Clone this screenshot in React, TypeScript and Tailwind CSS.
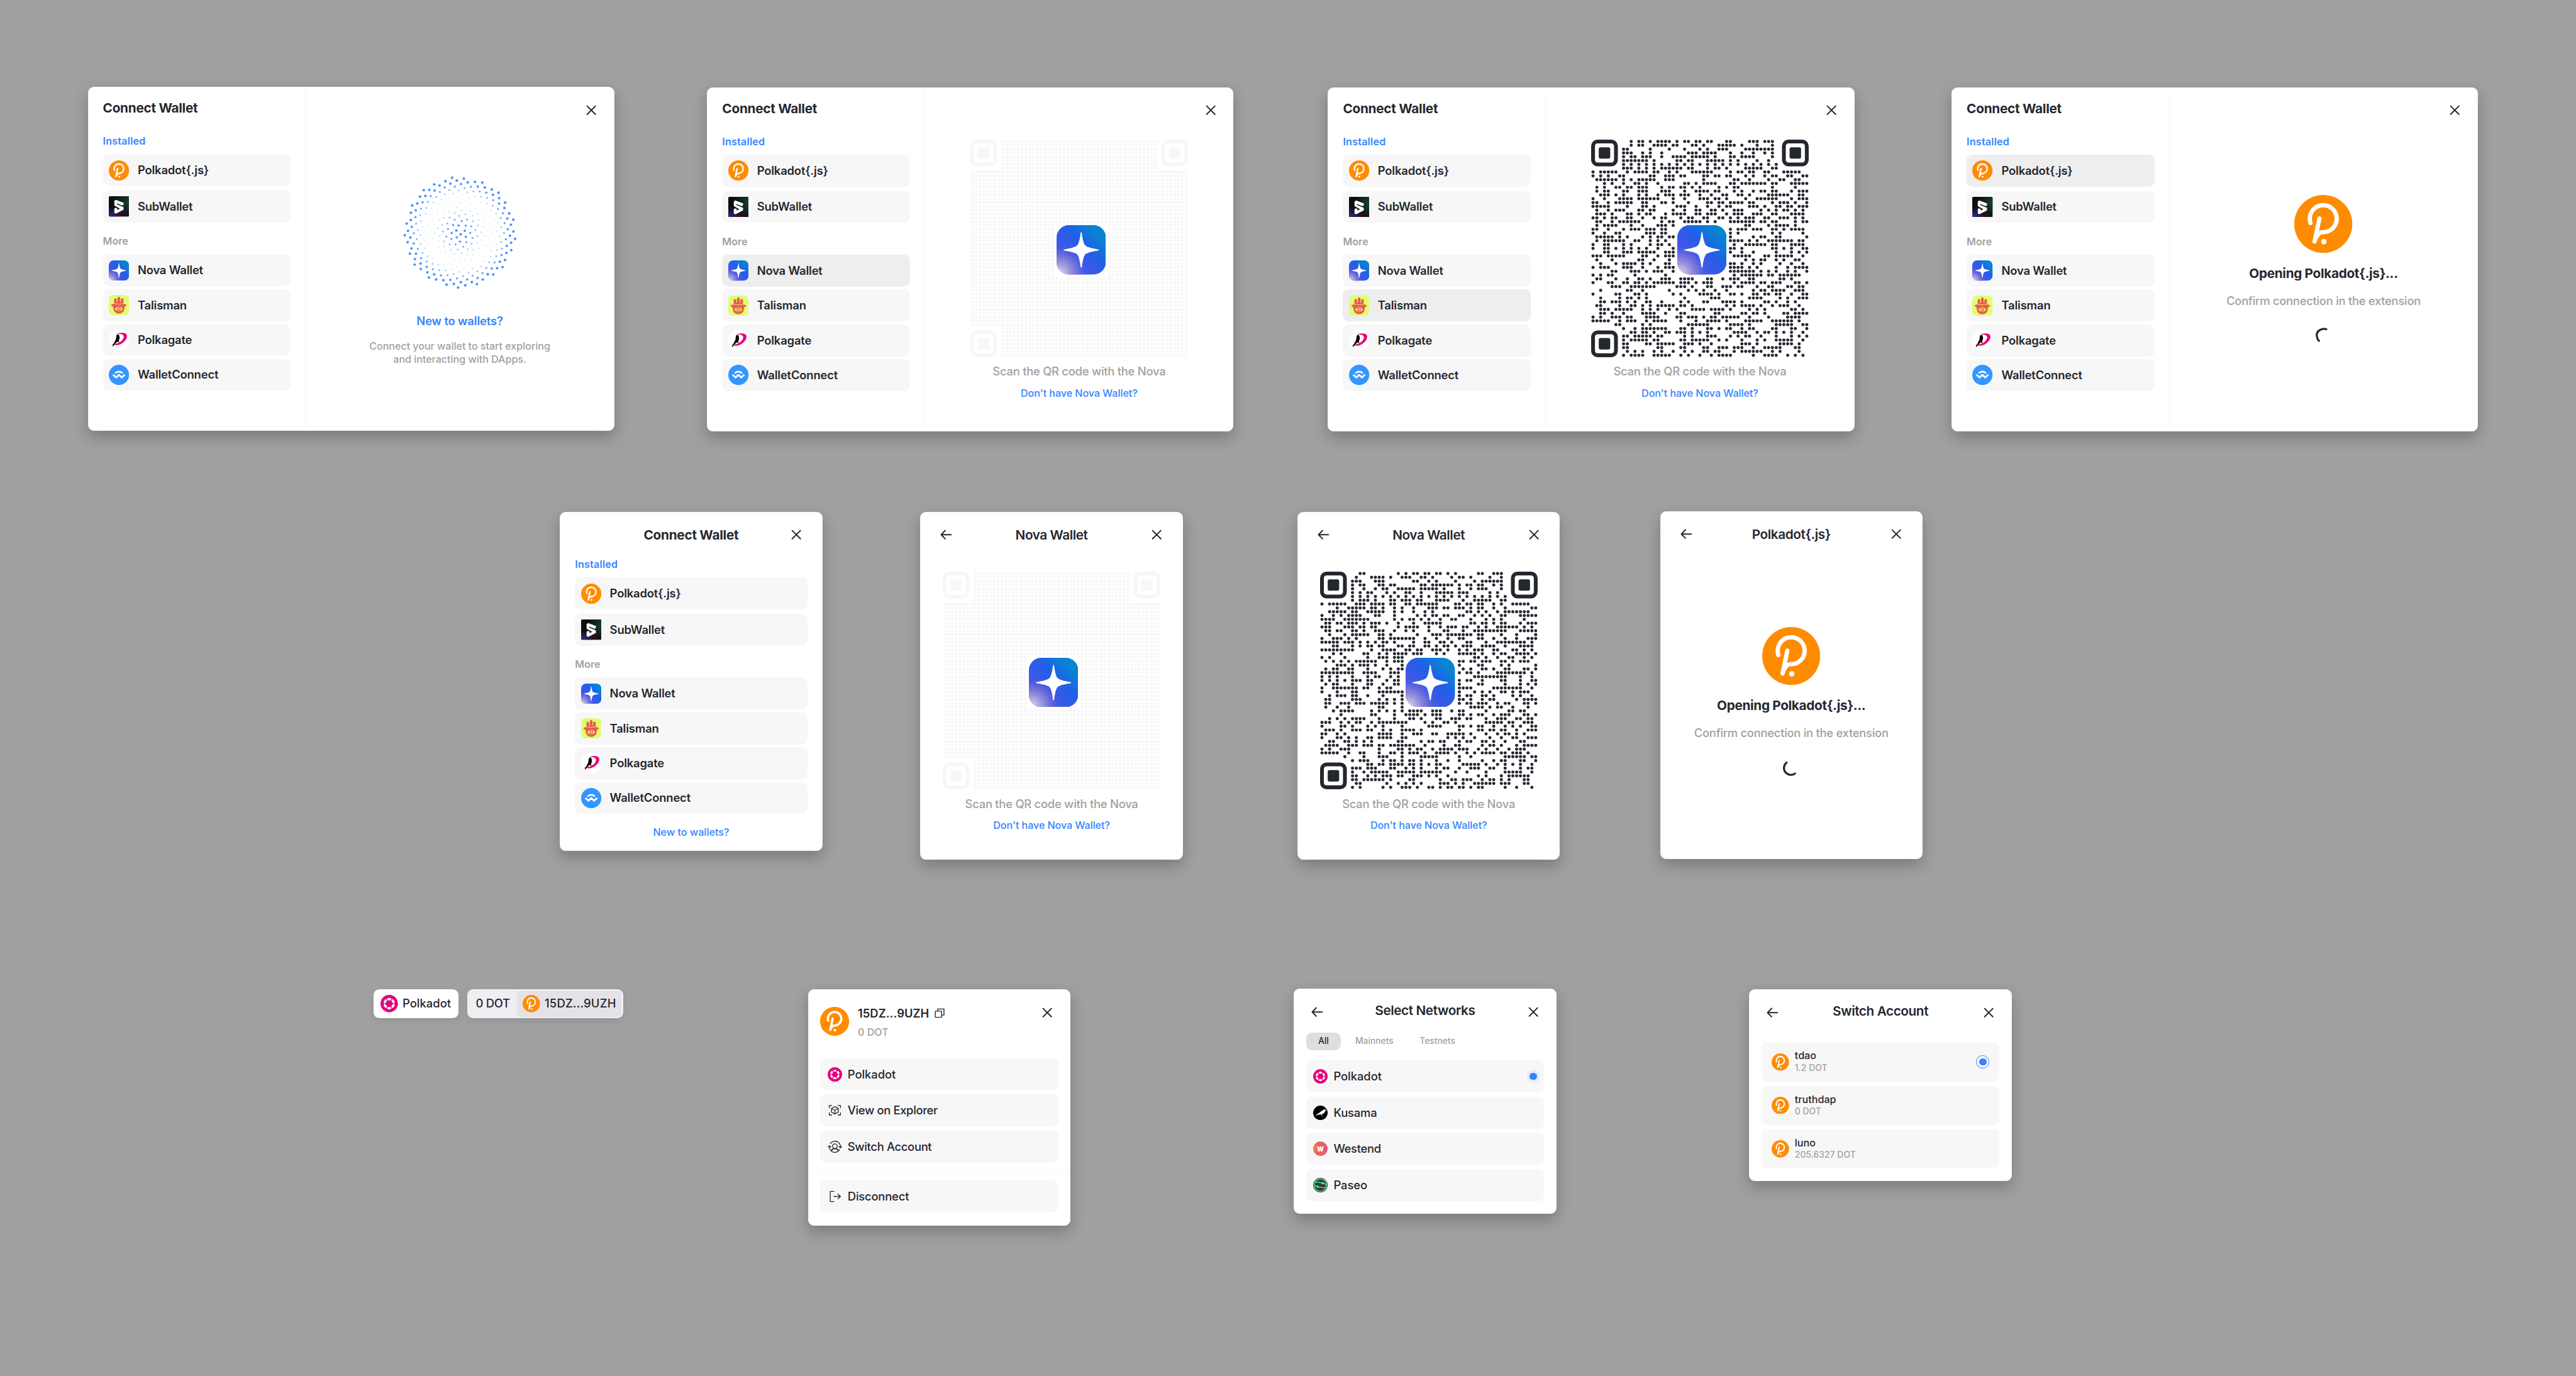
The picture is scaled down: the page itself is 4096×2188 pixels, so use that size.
import type { ReactNode } from "react";

const QR_DESKTOP = `10,12-13,15,17-20,22,24-25,27-28,30-31,35-36,41-43,45-47
10,12-13,16-19,21-22,26-27,29,33-37,39,43,47
8-9,15,20,24,28,30,33-35,40-47
8-10,13,15,18,25-27,29-32,36,39,42,45,47
8,10-11,13-15,18,21-24,26-30,32,36-37,39-42,47
8-14,16,22-23,25-26,30-34,36,38,43,46
8,10,12,14,16,18,20,22,24,26,28,30,32,34,36,38,40,42,44,46,48
8-10,12,14,16,18-23,25-26,30,32-33,35,40-44,47-48
0,2-6,9,11-14,16-17,20,22,26-31,36,38-39,41-42,45-46,50-54
0,2,4,7-8,15-16,19-21,23-24,29-30,32-33,35-36,40,42,45,47-48,51-52,55-56
1-6,8,10,12-16,19-21,29,37-38,41,46,49-50,53-54
3,5,8,11-12,14,17,24-25,27,29-32,36-37,39-45,47-48,52-56
1,3,6-7,9-10,12-14,18,20-21,23-24,26,28,33,35,37-38,47,53
1,3-4,8-9,12-14,18-20,24,27-30,32-33,37,39,42,44-45,47-48,52,54-56
2-4,6,8,12,14,17,19-21,23-25,28,31,34-35,38-39,41,46-51,54-55
0,3,7-10,12-17,21,24,28-30,32-33,35,40,43-48,52,54-56
0-1,4,6-10,13-14,18-19,21,25,30-31,33-34,36-39,41-42,47,49-51,53,56
0-4,9,13-14,16,22-24,27,30,33,35-36,41-43,45,48-49,51-52,54-56
1,4,6-8,12-13,15-16,21,24,27-28,31-32,34,37-39,44,46,48,50-51,53,55
1-3,5,9-10,12,14-15,19,21-24,27-28,30-32,35,37-39,42-44,47-48,52-55
0-1,3,5-6,9-10,13,16,18-19,23,25-26,29-30,33-34,36,38,40-42,45-46,49-51,53,55
1-2,5,7-12,18,20-21,24-28,30,32,36-42,44-45,47-48,53,55-56
1,3-6,10,13,17-19,21,40-41,46,48-51,53
0-1,4,8,10-12,14-16,18-19,36,38-40,42-44,47-48,50,52-55
0,3,6-7,14-16,18-19,36,38,47,49,55
1-5,7,9,13,15,17-18,20-21,36,42,44-45,48-49,56
1,3-8,11-12,15,17,19,36-39,41,43,46-52,54-55
0,3-4,8,10,15,17-18,20,37,40-45,47-48,52-55
0,3-4,6,8,10,12,14,17,21,36-37,39,47-48,50,52,55-56
3-4,8-10,12-16,19-21,36,39,42,48,52,54,56
0-2,4-8,13-14,17,19-21,37-41,45-46,48-52,55
1,5,12-13,16,20,40,42,44-45,48,50,53-54
2,6,8-11,13,15,19-20,36-37,39,42,44,49,52,55
0,2-4,8-10,13,17,19-21,36-39,41,43,48,51,53-56
5-6,10-12,14,16-18,21,36-42,44,46,48,51,53,56
0,2,4-5,11,19,37,39-44,46-47,49-54
1-2,6,9,12-13,15,18-20,23-26,30-31,34,36-38,41-42,49-50,52
0,4-5,8-9,11-12,14,16-21,23-25,27,29-31,37,39-42,44-45,47-49,53-54,56
5-7,10-16,22-24,26,30-31,34-36,38-39,43,46-47,51-52,54-55
2,9-10,13,20,25,27,29,32,35,42,44-45,47-50,53-55
0,6-7,11-12,14,21,23,28-31,33,36-37,39,42-43,45-46,48-49,52,55-56
2,7,9-10,12,14,24,31-33,41-44,49,51,54-56
2-3,5-7,9,11,14-15,18,23,25,29-30,34-37,39,45-46,48,51,53
1-2,7,10-11,13,15,17-21,23-24,26,35,37,39-42,44,47,49-51,54
2-4,6-10,13,15,17,20,22,26-29,31-34,36,41,43,45,52-53,55
2-3,5,8,13-16,19,23-24,32-33,39-40,42-43,45,50-51,53-56
0,2,5-7,9-10,14-17,22-23,25-27,29,31-32,34-38,41,46,51-54
0-4,7,9-11,14,16-19,23,27,30-33,35,40-44,47-52,54
6-7,13,15,25-30,36-39,41,48-52,55-56
8,11,13-19,23-24,26,30-31,33,35-36,39,41-42,47-48,52-53,56
10-11,13-14,16,19-20,22-24,26,28,30,37-40,43,45-46,48,50,52,55
8-9,11-15,17-18,24,26,30-32,36,38,40-41,44,48,52,54,56
8,10-14,16-17,23-24,26-30,33,35,39,43,45,48-52,55
8-9,14-15,17-21,24-26,28,31,39-41,43,49-52,54
8-9,17-18,23-24,29-30,33-35,37-39,42,45-49,53-54
9,11,13,16,18,21,24,26,29-30,32-33,37,39-44,47,49,54
8,10-13,16-20,23,25,28,31,33-36,42,45-48,51,53,55`;

const QR_MOBILE = `10-11,20,22,24-25,27-28,30-31,33,35,41-42,45-47
9,13-16,18,21-23,26-27,29,34,36-37,39,44,47
8-10,14-16,24-25,28,30,35,40,42-47
8,10-11,15-16,18-19,26-27,29-34,36,38-39,41-42,45,47
8,11,14,16-17,20-24,26-30,32,36,39,41-43,47
8,10,12-13,17,19,22-23,26,30-34,36-38,44,46
8,10,12,14,16,18,20,22,24,26,28,30,32,34,36,38,40,42,44,46,48
8,10-12,14,18-19,21-23,25-26,30-33,37,40-44,47-48
0,2-6,9-11,13-16,18-19,22-23,25-30,35-36,38-39,41-42,45,47,50-54
4,7-11,13-14,16,19,21,24,28-30,32-33,35-37,39,41-42,45,48,55-56
2-6,8-9,12-16,19,21,24,27,29,38-39,41,43,46,48-54
0,3,5,7-10,14-15,19,25,27,29-30,32-33,36-37,40,42,44,47-48,52-56
0-3,6-12,19,21,23-24,26,28,31,34-35,39,43,45,47,53
1-2,4-5,7-9,11,13-15,17,20,24,27-31,39-40,42-43,45,47-48,52,54-56
0-2,6-8,10-11,13-14,20,22-25,28,31,33-35,37-38,41,43,46-51,53,55
1-2,4-5,8-9,11,14-16,19,22,24,28,32-33,37,40-48,52-56
2,6,8-12,15-16,18,25,29-31,33-39,41-42,47,51,56
0,3-5,7,9,15-16,18-24,27,30,33,36-37,41-42,45,48,51,54-56
0-4,6-8,10,12,14,16-17,19,24,27-28,31-32,34,38-39,43,46-53,55
3-4,8,10,12-13,15-16,20-21,23-24,27-28,30,32-33,35,37-39,42-45,48,52-55
0-8,13,16-19,22-23,25-26,29-31,33,36,38,40-42,45-46,50-51,53,55
3,5,11-12,15,17,19-22,24-26,30,32,36-40,42,45,47-48,51-54,56
0,2,6,12,15-17,19-21,40-41,43,46,49-50,53,55
1,3,5,7,9-14,17,19-21,36-37,39-40,42-44,47-48,50,52-54
4-6,8,10-12,14,17,21,36,41-42,47,49,56
1,3-4,7-8,12,16,18,20-21,37,39,42-43,45,48-49,53-54,56
0-8,11-14,18-20,36,38-39,41,46-53,55
0,2,4,8,12,14-15,18,20,40-48,52,55
0,2,4,6,8-10,12-13,17,19-20,36,38-39,42,47-48,52,55-56
1,3-4,8,12-13,16,19-20,36,41-42,48,52,54,56
0,3-9,11-12,15,17-18,36-39,45-52,55
0,4,8-9,15-21,36,40,42,44,47-48,50,52-54
2,4-6,8-9,12,16,21,36,38-39,42-43,45,50,52,55
1-2,8-10,15,17,19,21,36-37,39,42,44-45,51,53-56
1-2,5-7,9-11,13-17,19,21,36,38-39,41-43,46,48-49,53-54,56
1,4,7,15-16,21,39-42,44,46-47,50,54
3,5-8,13,15,17,19,21,23-26,29-31,34,36-37,43,49-50,52-53
5,13-14,19,22-25,27,29-31,36-37,39,41-42,45,47-49,53-54,56
2,4,6,8-11,15,19,23-24,26,30-31,34-36,38-39,43,46-48,51-52,54-55
0-2,5,7,9-10,13,15-22,27,29,32-33,35,43-47,49-50,53-55
0,5-6,8,12,14,16,21,28-31,36-37,39,41-42,45,48,50,52,55-56
1-3,5,8-10,12-13,16,18,21-24,26,36,41-42,44-45,47-48,51,54-56
0-1,4,6,15-18,21,24-26,29-30,33-37,39,43,46,48-49,51,53
0,4-5,7,9,12-13,15-18,21-22,33,35,37,40,44,47,50-51,54-56
2-3,6-7,9,11,13,20-21,26,28-29,31-32,36,38-39,42-43,45,48,52-53
1-4,7-9,11-13,15-16,18-24,27,32,35-36,42,44-45,47,51,53-56
0,2,5-7,15,20-21,23,25-26,29,31-34,36-38,41,43,46,49,51-53
0-4,7,10-11,15,18-19,21,23-25,27,30-33,35,38,40,42-45,47-48,50-52,54
6,11,15-17,21,26-30,36,39,48-53,55-56
8,10-12,16,18-19,21,23-24,26,30,33,36,42,45,47-48,52-53,56
12-13,15-16,18-21,23-24,26,28,30-31,37-41,43,46,48,50,52,55
8-10,12-14,18-19,22,24,26,30,32-33,36,39-41,44-45,48,52,54-55
8,11,13-17,20-24,26-31,35,38,43,48-52,55
8-9,12,14,16-18,20-21,24-26,28,30,33,41,43,47,49-54
8-9,11-16,18,23-24,31,34-35,37-39,42,44-45,47,49,53-54
9-10,17,20,22,24,26,31-33,35,37,40-45,47-49,53-54
8,10,16,18,21-23,25,28-29,31,33-34,36-37,39,41-42,48,51,55`;

/* ---------- logos ---------- */

const PolkadotJs = ({ className }: { className: string }) => (
  <svg viewBox="0 0 80 80" className={`shrink-0 ${className}`} fill="none">
    <circle cx="40" cy="40" r="40" fill="#ff8c00" />
    <path
      d="M22.3 38.6C21.6 36.6 21.4 34.6 21.4 32.7A18.6 18.6 0 1 1 40 51.3C36 51.4 33 52 31.2 57.4M34.7 32.5L28.1 64.1"
      stroke="#fff"
      strokeWidth="5.9"
      strokeLinecap="round"
    />
    <path d="M33 49.5L40 51L36 55.5C33 57 32 60 31 65L29.5 54Z" fill="#fff" />
    <circle cx="40.8" cy="64.5" r="3.7" fill="#fff" />
  </svg>
);

const SubWallet = () => (
  <svg viewBox="0 0 28 28" className="size-7 shrink-0" fill="none">
    <defs>
      <radialGradient id="sw-g" cx="1" cy="0.3" r="0.75">
        <stop offset="0" stopColor="#173f33" />
        <stop offset="1" stopColor="#173f33" stopOpacity="0" />
      </radialGradient>
      <radialGradient id="sw-b" cx="0.05" cy="1" r="0.5">
        <stop offset="0" stopColor="#2b2f8c" />
        <stop offset="1" stopColor="#2b2f8c" stopOpacity="0" />
      </radialGradient>
      <radialGradient id="sw-m" cx="0.5" cy="1" r="0.45">
        <stop offset="0" stopColor="#3a1028" />
        <stop offset="1" stopColor="#3a1028" stopOpacity="0" />
      </radialGradient>
    </defs>
    <rect width="28" height="28" rx="1.4" fill="#0b0d0e" />
    <rect width="28" height="28" rx="1.4" fill="url(#sw-g)" />
    <rect width="28" height="28" rx="1.4" fill="url(#sw-m)" />
    <rect width="28" height="28" rx="1.4" fill="url(#sw-b)" />
    <path
      d="M7.6 6.6L9.8 5L20.4 9.2V11.8L18.4 12.8L11 9.8V11L20.4 15.1V18.6L9.8 24L7.6 22.9V17L9.4 15.8L11.6 16.8V18.9L15.4 17.1L7.6 12.8Z"
      fill="#fff"
    />
  </svg>
);

const Nova = ({ className }: { className: string }) => (
  <svg viewBox="0 0 68 68" className={`shrink-0 ${className}`} fill="none">
    <defs>
      <linearGradient id="nv-a" x1="0" y1="1" x2="1" y2="0">
        <stop offset="0" stopColor="#5a50e0" />
        <stop offset="0.4" stopColor="#3a59e8" />
        <stop offset="0.58" stopColor="#205fe8" />
        <stop offset="0.8" stopColor="#0b80d4" />
        <stop offset="1" stopColor="#0389cf" />
      </linearGradient>
      <radialGradient id="nv-b" cx="0.04" cy="1" r="0.62">
        <stop offset="0" stopColor="#e6e3ee" />
        <stop offset="0.3" stopColor="#b0a9dc" stopOpacity="0.95" />
        <stop offset="0.65" stopColor="#7a73d8" stopOpacity="0.75" />
        <stop offset="1" stopColor="#3a59e8" stopOpacity="0" />
      </radialGradient>
    </defs>
    <rect width="68" height="68" rx="17" fill="url(#nv-a)" />
    <rect width="68" height="68" rx="17" fill="url(#nv-b)" />
    <path
      d="M33.3 10H34.7C35.6 18 37.1 24.3 38.9 27.2Q39.9 28.5 41.4 29.2C44.5 30.8 50.5 32.3 58.2 33.5V34.8C50.5 36 44.5 37.4 41.4 39Q39.9 39.8 38.9 41.1C37.1 44 35.6 50.3 34.7 58.3H33.3C32.4 50.3 30.9 44 29.1 41.1Q28.1 39.8 26.6 39C23.5 37.4 17.5 36 9.8 34.8V33.5C17.5 32.3 23.5 30.8 26.6 29.2Q28.1 28.5 29.1 27.2C30.9 24.3 32.4 18 33.3 10Z"
      fill="#fff"
    />
  </svg>
);

const Talisman = () => (
  <svg viewBox="0 0 28 28" className="size-7 shrink-0" fill="none">
    <rect width="28" height="28" rx="7" fill="#deff70" />
    <g fill="#ee5850">
      <path d="M7.4 6.6a1.8 1.8 0 0 1 3.6 0V10L12 9.8V4.4a1.9 1.9 0 0 1 3.8 0V9.8L16.7 10V6.6a1.8 1.8 0 0 1 3.6 0V11.7Q17 11.4 13.9 12.6Q10.8 11.4 7.4 11.7Z" />
      <path d="M3 13.8Q4.6 12 7.4 12.4Q11 12.4 13.9 13.3Q16.8 12.4 20.4 12.4Q23.2 12 24.7 13.8Q23.9 15.3 22.3 15.6Q21.6 17 21.4 19.2C21 23 18 25.6 13.9 25.6S6.8 23 6.4 19.2Q6.2 17 5.4 15.6Q3.8 15.3 3 13.8Z" />
    </g>
    <path d="M8.3 19.2Q13.9 12.9 19.3 19.2Q13.9 25.5 8.3 19.2Z" fill="#deff70" />
    <circle cx="13.8" cy="19.2" r="2.5" fill="#ee5850" />
    <circle cx="13.8" cy="19.2" r="1.15" fill="#deff70" />
  </svg>
);

const Polkagate = () => (
  <svg viewBox="0 0 28 28" className="size-7 shrink-0" fill="none">
    <circle cx="14" cy="14" r="14" fill="#fff" />
    <path
      d="M11 6C14 4.8 17 4.5 18.8 4.6C22.6 4.7 25.1 6 25.1 9C25.1 14.6 17.6 21.4 10.4 21.4C8 21.4 5.8 21.1 4 20.2C12 20.8 20.2 15.8 20.6 10C20.7 6.6 15.6 5.5 11 6Z"
      fill="#e6007a"
    />
    <path
      d="M10.6 7.9Q11 6.6 12.7 6.6Q14.3 6.9 14.5 8.7Q15.6 11.4 14.2 14.4L13.5 16.2L15.3 17.9L11.7 17L9.8 18.4L5.6 23.1L4.7 22.8L7.9 17.4Q8.4 15.4 9.8 13.6Q10.2 10.6 10.6 7.9Z"
      fill="#000"
    />
  </svg>
);

const WalletConnect = () => (
  <svg viewBox="0 0 28 28" className="size-7 shrink-0" fill="none" stroke="#fff">
    <circle cx="14" cy="14" r="14" fill="#3396ff" stroke="none" />
    <path d="M5.8 13.7L10.1 17.5L14 14.1L17.9 17.5L22.2 13.7" strokeWidth="2.5" />
    <path d="M8.9 11.7Q14 7.3 19.1 11.7" strokeWidth="2.3" />
  </svg>
);

const Polkadot = ({ className }: { className: string }) => (
  <svg viewBox="0 0 24 24" className={`shrink-0 ${className}`} fill="#fff">
    <circle cx="12" cy="12" r="12" fill="#e6007a" />
    {[0, 60, 120, 180, 240, 300].map((a) => (
      <ellipse key={a} cx="12" cy="5.8" rx="2.9" ry="1.75" transform={`rotate(${a} 12 12)`} />
    ))}
  </svg>
);

const Kusama = () => (
  <svg viewBox="0 0 20 20" className="size-5 shrink-0">
    <circle cx="10" cy="10" r="10" fill="#000" />
    <path
      d="M2.4 13.9L9 9.5Q13 6.2 14.8 5.4Q17.2 4.6 18.4 6.5L17 6.8Q16.6 9.3 14.4 11L11.9 11.8L12 13L13 14.1L12.6 14.9L11 12.4L10.4 12.1L6.5 12.7Z"
      fill="#fff"
    />
  </svg>
);

const Westend = () => (
  <svg viewBox="0 0 20 20" className="size-5 shrink-0" fill="none">
    <defs>
      <linearGradient id="we" x1="0" y1="0.4" x2="1" y2="0.6">
        <stop offset="0" stopColor="#f0853c" />
        <stop offset="1" stopColor="#e8558c" />
      </linearGradient>
      <clipPath id="we-c">
        <circle cx="10" cy="10" r="10" />
      </clipPath>
    </defs>
    <circle cx="10" cy="10" r="10" fill="url(#we)" />
    <g clipPath="url(#we-c)" stroke="#e0247c" strokeWidth="0.35">
      <path d="M2 4.5Q10 3 17 4.5M0 8.5Q4 10 6 10M5 3Q10 -1 10 5Q9 9 4 13Q1 15 0 14M8 1Q5 6 9 8M14 9Q17 10 20 9.5M17 7Q15.5 11 18.5 14M7 14Q7 17 5 19M9 14Q11 18 17 17M3 16Q8 17 12 20" />
    </g>
    <text
      x="10"
      y="13.7"
      textAnchor="middle"
      fill="#fff"
      className="font-['Inter'] text-[8.4px] font-black"
    >
      W
    </text>
  </svg>
);

const Paseo = () => (
  <svg viewBox="0 0 20 20" className="size-5 shrink-0" fill="none" stroke="#4deb94">
    <circle cx="10" cy="10" r="10" fill="#38393f" stroke="none" />
    <circle cx="10" cy="10" r="8.6" strokeWidth="1.1" />
    <path
      d="M2.6 6.6C5 5.2 8 6 10.5 6.6C13.5 7 16.5 7 18.4 10.5M1.6 9.4C2.8 11 4 12 6.2 12.2C9 12.6 13 14.6 17.6 13"
      strokeWidth="1.2"
    />
    <g fill="#4deb94" stroke="none">
      <circle cx="13" cy="7.2" r="1.6" />
      <circle cx="6.2" cy="12.1" r="1.6" />
    </g>
  </svg>
);

/* ---------- glyphs ---------- */

const Close = () => (
  <svg viewBox="0 0 16 16" className="size-4 shrink-0" fill="none">
    <path d="M2.3 2.3L13.7 13.7M13.7 2.3L2.3 13.7" stroke="#25272f" strokeWidth="1.7" strokeLinecap="round" />
  </svg>
);

const Back = () => (
  <svg viewBox="0 0 16 16" className="size-4 shrink-0" fill="none">
    <path
      d="M6.9 2.2L1.3 8L6.9 13.8M1.3 8H15"
      stroke="#25272f"
      strokeWidth="1.7"
      strokeLinecap="round"
      strokeLinejoin="round"
    />
  </svg>
);

const Copy = () => (
  <svg viewBox="0 0 14 14" className="size-3.5 shrink-0" fill="none" stroke="#25272f" strokeWidth="1.2">
    <rect x="1" y="4.2" width="8.7" height="8.5" rx="0.6" />
    <path d="M4.2 4.2V1.2H13V9.7H9.7" strokeLinejoin="round" />
  </svg>
);

const Explorer = () => (
  <svg
    viewBox="0 0 20 20"
    className="size-5 shrink-0"
    fill="none"
    stroke="#25272f"
    strokeWidth="1.15"
    strokeLinecap="round"
    strokeLinejoin="round"
  >
    <path d="M2.3 6.5V3.4H5.7M14.3 3.4H17.7V6.5M17.7 13.4V16.5H14.3M5.7 16.5H2.3V13.4" />
    <path d="M10 4.9L14.7 7.4V12.5L10 15L5.3 12.5V7.4ZM5.3 7.4L10 10L14.7 7.4M10 10V15" />
  </svg>
);

const Switch = () => (
  <svg
    viewBox="0 0 20 20"
    className="size-5 shrink-0"
    fill="none"
    stroke="#25272f"
    strokeWidth="1.15"
    strokeLinecap="round"
    strokeLinejoin="round"
  >
    <path d="M3.8 5.6A7.6 7.6 0 0 1 17.6 11.2M16.4 14A7.6 7.6 0 0 1 2.4 8.8" />
    <path d="M15.5 9.6L17.6 11.4L19.5 9.6M0.6 10.3L2.4 8.6L4.5 10.3" />
    <circle cx="10" cy="9.2" r="3.3" />
    <path d="M5 15.2Q6.6 12.6 10 12.6T15 15.2" />
  </svg>
);

const Logout = () => (
  <svg
    viewBox="0 0 20 20"
    className="size-5 shrink-0"
    fill="none"
    stroke="#25272f"
    strokeWidth="1.15"
    strokeLinecap="round"
    strokeLinejoin="round"
  >
    <path d="M8.8 3H3.6V17H8.8M8.7 10H17.7M14.3 6.7L17.7 10L14.3 13.3" />
  </svg>
);

const Spinner = ({ d }: { d: string }) => (
  <svg viewBox="-12 -12 24 24" className="mt-[26px] size-6 shrink-0" fill="none">
    <path d={d} stroke="#25272f" strokeWidth="2.8" strokeLinecap="round" />
  </svg>
);

/* ---------- QR ---------- */

const CELL = 300 / 57;

function cells(source: string) {
  return source.split("\n").map((row) => {
    const out: number[] = [];
    row.split(",").forEach((part) => {
      const [a, b = a] = part.split("-").map(Number);
      for (let c = a; c <= b; c++) out.push(c);
    });
    return out;
  });
}

const BLANK = Array.from({ length: 57 }, (_, r) =>
  Array.from({ length: 57 }, (_, c) => c).filter(
    (c) =>
      !(r < 8 && (c < 8 || c > 48)) &&
      !(r > 48 && c < 8) &&
      !(r > 21 && r < 36 && c > 21 && c < 36),
  ),
);

const QR = ({ source }: { source?: string }) => {
  const rows = source ? cells(source) : BLANK;
  const color = source ? "#25272f" : "#f7f7f7";
  return (
    <div className="relative size-[300px] shrink-0">
      <svg viewBox="0 0 300 300" className="size-[300px]" fill={color}>
        {rows.map((row, r) =>
          row.map((c) => (
            <circle key={`${r}-${c}`} cx={(c + 0.5) * CELL} cy={(r + 0.5) * CELL} r={CELL * 0.41} />
          )),
        )}
        {[
          [0, 0],
          [50, 0],
          [0, 50],
        ].map(([x, y]) => (
          <g key={`${x}-${y}`} transform={`translate(${x * CELL} ${y * CELL})`}>
            <rect
              x={CELL / 2}
              y={CELL / 2}
              width={CELL * 6}
              height={CELL * 6}
              rx="6.3"
              fill="none"
              stroke={color}
              strokeWidth={CELL}
            />
            <rect x={CELL * 2} y={CELL * 2} width={CELL * 3} height={CELL * 3} rx="2.4" />
          </g>
        ))}
      </svg>
      <div className="absolute left-[118.5px] top-[118.5px]">
        <Nova className="size-[68px]" />
      </div>
    </div>
  );
};

const QRBlock = ({ source }: { source?: string }) => (
  <>
    <QR source={source} />
    <p className="mt-2.5 text-base leading-5 font-medium tracking-[-0.015em] text-[#a1a1a1]">
      Scan the QR code with the Nova
    </p>
    <p className="mt-2.5 text-sm leading-5 font-medium tracking-[-0.005em] text-[#3384ff]">Don't have Nova Wallet?</p>
  </>
);

/* ---------- dotted sphere ---------- */

const Sphere = () => (
  <svg viewBox="-80 -80 160 160" className="mt-[57.5px] size-40 shrink-0" fill="#3384ff">
    {Array.from({ length: 300 }, (_, n) => {
      const radius = 4.434 * Math.sqrt(n + 0.5);
      const angle = ((69.5 + n * 137.508) * Math.PI) / 180;
      const t = radius / 76.6;
      const s = t < 0.62 ? 0.5 + 0.5 * Math.cos((t / 0.62) * Math.PI) : Math.min(1, (t - 0.62) / 0.28);
      return (
        <circle
          key={n}
          cx={radius * Math.cos(angle)}
          cy={radius * Math.sin(angle)}
          r={0.55 + 1.25 * s}
          opacity={0.25 + 0.65 * s}
        />
      );
    })}
  </svg>
);

/* ---------- building blocks ---------- */

const Card = ({ className, children }: { className: string; children: ReactNode }) => (
  <section
    className={`shrink-0 rounded-lg border border-[#f7f7f7] bg-white shadow-[0_8px_20px_rgba(0,0,0,0.24)] ${className}`}
  >
    {children}
  </section>
);

const Row = ({ icon, label, active }: { icon: ReactNode; label: string; active?: boolean }) => (
  <div
    className={`flex h-11 shrink-0 items-center gap-3 rounded-lg px-2 text-base leading-5 font-semibold tracking-[-0.011em] ${
      active ? "bg-[#eeeeee]" : "bg-[#f7f7f7]"
    }`}
  >
    {icon}
    <span>{label}</span>
  </div>
);

const WalletList = ({ active }: { active?: string }) => (
  <>
    <p className="text-sm leading-[18px] font-semibold tracking-[0.012em] text-[#3384ff]">Installed</p>
    <div className="mt-[9px] flex flex-col gap-1.5">
      <Row icon={<PolkadotJs className="size-7" />} label="Polkadot{.js}" active={active === "Polkadot{.js}"} />
      <Row icon={<SubWallet />} label="SubWallet" />
    </div>
    <p className="mt-[17px] text-sm leading-[18px] font-semibold text-[#a1a1a1]">More</p>
    <div className="mt-[9px] flex flex-col gap-1">
      <Row icon={<Nova className="size-7" />} label="Nova Wallet" active={active === "Nova Wallet"} />
      <Row icon={<Talisman />} label="Talisman" active={active === "Talisman"} />
      <Row icon={<Polkagate />} label="Polkagate" />
      <Row icon={<WalletConnect />} label="WalletConnect" />
    </div>
  </>
);

const Desktop = ({ className, active, children }: { className: string; active?: string; children: ReactNode }) => (
  <Card className={`flex h-[474px] w-[726px] ${className}`}>
    <div className="w-[300px] border-r border-[#f7f7f7] px-5 pt-[18px]">
      <h2 className="mb-[27px] text-lg leading-5 font-bold tracking-[-0.013em]">Connect Wallet</h2>
      <WalletList active={active} />
    </div>
    <div className="flex flex-1 flex-col items-center">
      <div className="flex h-[62px] w-full shrink-0 items-center justify-end pr-[23px]">
        <Close />
      </div>
      {children}
    </div>
  </Card>
);

const Header = ({
  title,
  back = true,
  className = "px-[27px]",
  titleClass = "font-semibold tracking-[-0.02em]",
}: {
  title: string;
  back?: boolean;
  className?: string;
  titleClass?: string;
}) => (
  <header className={`flex h-[62px] w-full shrink-0 items-center ${className}`}>
    {back ? <Back /> : <span className="w-4" />}
    <h2 className={`flex-1 text-center text-lg leading-5 ${titleClass}`}>{title}</h2>
    <Close />
  </header>
);

const Opening = ({ arc }: { arc: string }) => (
  <>
    <PolkadotJs className="size-20" />
    <p className="mt-[18px] text-lg leading-5 font-bold tracking-[-0.016em]">{"Opening Polkadot{.js}..."}</p>
    <p className="mt-[18.5px] text-base leading-5 font-medium tracking-[-0.016em] text-[#a1a1a1]">
      Confirm connection in the extension
    </p>
    <Spinner d={arc} />
  </>
);

const Action = ({
  icon,
  label,
  tracking = "tracking-[-0.004em]",
  children,
}: {
  icon: ReactNode;
  label: string;
  tracking?: string;
  children?: ReactNode;
}) => (
  <div className="flex h-11 items-center gap-2 rounded-lg bg-[#f7f7f7] pl-2.5 pr-1.5 text-base leading-5 font-medium">
    {icon}
    <span className={`flex-1 ${tracking}`}>{label}</span>
    {children}
  </div>
);

const Account = ({ name, balance, selected }: { name: string; balance: string; selected?: boolean }) => (
  <div className="flex h-[54px] items-center gap-2 rounded-lg bg-[#f7f7f7] px-3.5">
    <PolkadotJs className="size-6" />
    <div className="flex-1">
      <p className="text-sm leading-4 font-medium">{name}</p>
      <p className="mt-px text-xs leading-4 font-medium tracking-[0.005em] text-[#a1a1a1]">{balance}</p>
    </div>
    {selected && (
      <span className="flex size-[18px] items-center justify-center rounded-full border border-[#3384ff]">
        <span className="size-2.5 rounded-full bg-[#3384ff]" />
      </span>
    )}
  </div>
);

export default function App() {
  return (
    <div className="h-screen overflow-hidden bg-[#a0a0a0]">
      <main className="flex w-[3552px] flex-col font-['Inter',sans-serif] text-[#25272f] [zoom:1.15315]">
        <div className="flex h-[704.6px] shrink-0 items-start pt-[120px] pl-[121px]">
          <Desktop className="">
            <Sphere />
            <p className="mt-8 text-base leading-5 font-semibold tracking-[-0.009em] text-[#3384ff]">New to wallets?</p>
            <p className="mt-4 text-center text-sm leading-[18px] font-medium tracking-[-0.003em] text-[#a1a1a1]">
              Connect your wallet to start exploring
              <br />
              and interacting with DApps.
            </p>
          </Desktop>
          <Desktop className="mt-[0.5px] ml-[128px]" active="Nova Wallet">
            <div className="flex flex-col items-center pt-[9px]">
              <QRBlock />
            </div>
          </Desktop>
          <Desktop className="mt-[0.5px] ml-[130px]" active="Talisman">
            <div className="flex flex-col items-center pt-[9px]">
              <QRBlock source={QR_DESKTOP} />
            </div>
          </Desktop>
          <Desktop className="mt-[0.5px] ml-[134px]" active="Polkadot{.js}">
            <div className="flex flex-col items-center pt-[85.5px]">
              <Opening arc="M3.6 -9Q-1.5 -10.5 -6 -7.3T-9.4 1T-6.5 7" />
            </div>
          </Desktop>
        </div>

        <div className="flex h-[658.8px] shrink-0 items-start pl-[772px]">
          <Card className="mt-px flex h-[467.5px] w-[362px] flex-col">
            <Header title="Connect Wallet" back={false} titleClass="font-bold tracking-[-0.013em]" />
            <div className="px-5 pt-px">
              <WalletList />
            </div>
            <p className="mt-4 text-center text-sm leading-[18px] font-medium text-[#3384ff]">New to wallets?</p>
          </Card>
          <Card className="mt-px ml-[135px] flex h-[480px] w-[362px] flex-col items-center">
            <Header title="Nova Wallet" />
            <div className="flex flex-col items-center pt-5">
              <QRBlock />
            </div>
          </Card>
          <Card className="mt-px ml-[158px] flex h-[480px] w-[362px] flex-col items-center">
            <Header title="Nova Wallet" />
            <div className="flex flex-col items-center pt-5">
              <QRBlock source={QR_MOBILE} />
            </div>
          </Card>
          <Card className="ml-[138px] flex h-[480px] w-[362px] flex-col items-center">
            <Header title="Polkadot{.js}" />
            <div className="flex flex-col items-center pt-[97px]">
              <Opening arc="M-6 -7.3A9.5 9.5 0 0 0 5.5 7.9" />
            </div>
          </Card>
        </div>

        <div className="flex shrink-0 items-start pl-[515px]">
          <div className="mt-[0.5px] flex gap-3 text-base leading-5 font-medium">
            <div className="flex h-10 w-[117px] items-center gap-1.5 rounded-lg bg-white pl-2.5 shadow-[0_4px_10px_rgba(0,0,0,0.08)]">
              <Polkadot className="size-6" />
              Polkadot
            </div>
            <div className="flex h-10 w-[215px] items-center justify-between rounded-lg bg-[#f0eef3] p-0.5 pl-3 shadow-[0_4px_10px_rgba(0,0,0,0.08)]">
              <span className="tracking-[-0.016em]">0 DOT</span>
              <div className="flex h-9 w-36 items-center gap-1.5 rounded-md bg-[#e4e2e7] pl-2 tracking-[0.01em]">
                <PolkadotJs className="size-6" />
                15DZ...9UZH
              </div>
            </div>
          </div>

          <Card className="mt-px ml-[255px] h-[326px] w-[362px]">
            <div className="flex items-start pt-[23px] pr-[23px] pl-4">
              <PolkadotJs className="size-10" />
              <div className="ml-3 flex-1">
                <div className="-mt-px flex items-center gap-2 text-base leading-5 font-semibold">
                  15DZ...9UZH
                  <Copy />
                </div>
                <p className="mt-1.5 text-sm leading-5 font-medium text-[#a1a1a1]">0 DOT</p>
              </div>
              <Close />
            </div>
            <div className="mt-[26px] flex flex-col gap-1.5 px-4">
              <Action icon={<Polkadot className="size-5" />} label="Polkadot" />
              <Action icon={<Explorer />} label="View on Explorer" tracking="tracking-[-0.02em]" />
              <Action icon={<Switch />} label="Switch Account" tracking="tracking-[-0.019em]" />
            </div>
            <div className="mt-3 border-t border-[#f7f7f7] px-4 pt-3">
              <Action icon={<Logout />} label="Disconnect" tracking="tracking-[-0.012em]" />
            </div>
          </Card>

          <Card className="ml-[308px] h-[310px] w-[362px]">
            <Header
              title="Select Networks"
              className="px-[23px]"
              titleClass="-mt-[5px] font-semibold tracking-[-0.02em]"
            />
            <div className="-mt-0.5 flex gap-1 px-4 text-xs leading-6 font-medium text-[#a1a1a1]">
              <span className="w-12 rounded-lg bg-[#dedede] text-center text-[#25272f]">All</span>
              <span className="px-4">Mainnets</span>
              <span className="px-4">Testnets</span>
            </div>
            <div className="mt-3.5 flex flex-col gap-1.5 px-4">
              <Action icon={<Polkadot className="size-5" />} label="Polkadot">
                <span className="flex size-[18px] items-center justify-center rounded-full bg-[#e4ebf9]">
                  <span className="size-2.5 rounded-full bg-[#3384ff]" />
                </span>
              </Action>
              <Action icon={<Kusama />} label="Kusama" tracking="tracking-[-0.012em]" />
              <Action icon={<Westend />} label="Westend" tracking="tracking-[-0.019em]" />
              <Action icon={<Paseo />} label="Paseo" />
            </div>
          </Card>

          <Card className="mt-px ml-[266px] h-[264px] w-[362px]">
            <Header
              title="Switch Account"
              className="px-[23px]"
              titleClass="-mt-[5px] font-semibold tracking-[-0.02em]"
            />
            <div className="mt-2.5 flex flex-col gap-1.5 px-4">
              <Account name="tdao" balance="1.2 DOT" selected />
              <Account name="truthdap" balance="0 DOT" />
              <Account name="luno" balance="205.6327 DOT" />
            </div>
          </Card>
        </div>
      </main>
    </div>
  );
}
